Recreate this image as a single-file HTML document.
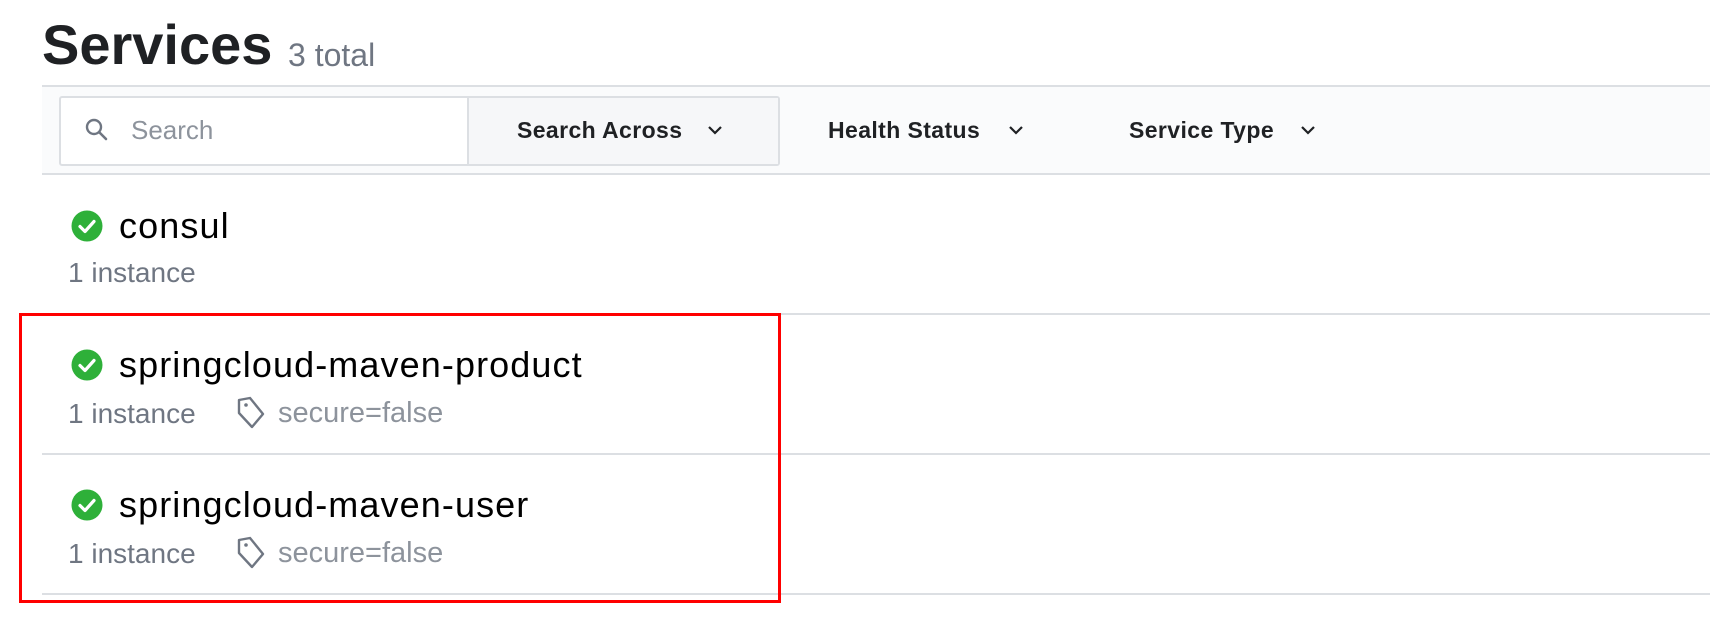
<!DOCTYPE html>
<html><head><meta charset="utf-8"><style>
*{margin:0;padding:0;box-sizing:border-box}
body{width:1710px;height:622px;background:#fff;font-family:"Liberation Sans",sans-serif;position:relative;overflow:hidden;color:#000}
.a{position:absolute;white-space:nowrap}
.hl{position:absolute;left:42px;right:0;height:2px;background:#dcdfe3}
.name{font-size:36px;letter-spacing:1.1px;left:119px}
.inst{font-size:28px;color:#6f7682;left:68px}
.tagt{font-size:29px;color:#8d939c;left:278px}
.btn{font-size:23px;font-weight:bold;color:#1f2124;letter-spacing:0.4px}
</style></head><body>
<div class="a" style="left:42px;top:13px;font-size:56px;font-weight:bold;color:#1f2124;line-height:64px">Services</div>
<div class="a" style="left:288px;top:36px;font-size:32px;color:#6f7682;line-height:38px">3 total</div>

<div style="position:absolute;left:42px;right:0;top:86px;height:89px;background:#fafbfc"></div>
<div class="hl" style="top:85px"></div>
<div class="hl" style="top:173px"></div>

<div style="position:absolute;left:59px;top:96px;width:721px;height:70px;border:2px solid #dcdfe3;border-radius:3px;background:#fff"></div>
<div style="position:absolute;left:467px;top:98px;width:311px;height:66px;background:#f6f7f9;border-left:2px solid #dcdfe3"></div>
<svg class="a" style="left:84px;top:117px" width="26" height="26" viewBox="0 0 26 26"><circle cx="10" cy="10" r="7" fill="none" stroke="#6f7682" stroke-width="2.4"/><path d="M15 15l7 7" stroke="#6f7682" stroke-width="2.6" stroke-linecap="round"/></svg>
<div class="a" style="left:131px;top:115px;font-size:26px;color:#8d939c">Search</div>
<div class="a btn" style="left:517px;top:117px">Search Across</div>
<svg class="a" style="left:707px;top:124px" width="16" height="12"><path d="M2 3l6 6 6-6" fill="none" stroke="#1f2124" stroke-width="2.2"/></svg>
<div class="a btn" style="left:828px;top:117px">Health Status</div>
<svg class="a" style="left:1008px;top:124px" width="16" height="12"><path d="M2 3l6 6 6-6" fill="none" stroke="#1f2124" stroke-width="2.2"/></svg>
<div class="a btn" style="left:1129px;top:117px">Service Type</div>
<svg class="a" style="left:1300px;top:124px" width="16" height="12"><path d="M2 3l6 6 6-6" fill="none" stroke="#1f2124" stroke-width="2.2"/></svg>

<svg class="a" style="left:71px;top:210px" width="32" height="32"><circle cx="16" cy="16" r="15.5" fill="#2eb039"/><path d="M9 16.5l5 5 9-10" fill="none" stroke="#fff" stroke-width="3.2" stroke-linecap="round" stroke-linejoin="round"/></svg>
<div class="a name" style="top:205px">consul</div>
<div class="a inst" style="top:257px">1 instance</div>
<div class="hl" style="top:313px"></div>

<svg class="a" style="left:71px;top:349px" width="32" height="32"><circle cx="16" cy="16" r="15.5" fill="#2eb039"/><path d="M9 16.5l5 5 9-10" fill="none" stroke="#fff" stroke-width="3.2" stroke-linecap="round" stroke-linejoin="round"/></svg>
<div class="a name" style="top:344px">springcloud-maven-product</div>
<div class="a inst" style="top:398px">1 instance</div>
<svg class="a" style="left:236px;top:396px" width="30" height="34" viewBox="0 0 30 34"><path d="M3 4l11-2 13 16-11 13L3 17z" fill="none" stroke="#6f7682" stroke-width="2.4" stroke-linejoin="round"/><circle cx="10" cy="9" r="1.8" fill="#6f7682"/></svg>
<div class="a tagt" style="top:397px">secure=false</div>
<div class="hl" style="top:453px"></div>

<svg class="a" style="left:71px;top:489px" width="32" height="32"><circle cx="16" cy="16" r="15.5" fill="#2eb039"/><path d="M9 16.5l5 5 9-10" fill="none" stroke="#fff" stroke-width="3.2" stroke-linecap="round" stroke-linejoin="round"/></svg>
<div class="a name" style="top:484px">springcloud-maven-user</div>
<div class="a inst" style="top:538px">1 instance</div>
<svg class="a" style="left:236px;top:536px" width="30" height="34" viewBox="0 0 30 34"><path d="M3 4l11-2 13 16-11 13L3 17z" fill="none" stroke="#6f7682" stroke-width="2.4" stroke-linejoin="round"/><circle cx="10" cy="9" r="1.8" fill="#6f7682"/></svg>
<div class="a tagt" style="top:537px">secure=false</div>
<div class="hl" style="top:593px"></div>

<div style="position:absolute;left:19px;top:313px;width:762px;height:290px;border:3px solid #f00"></div>
</body></html>
